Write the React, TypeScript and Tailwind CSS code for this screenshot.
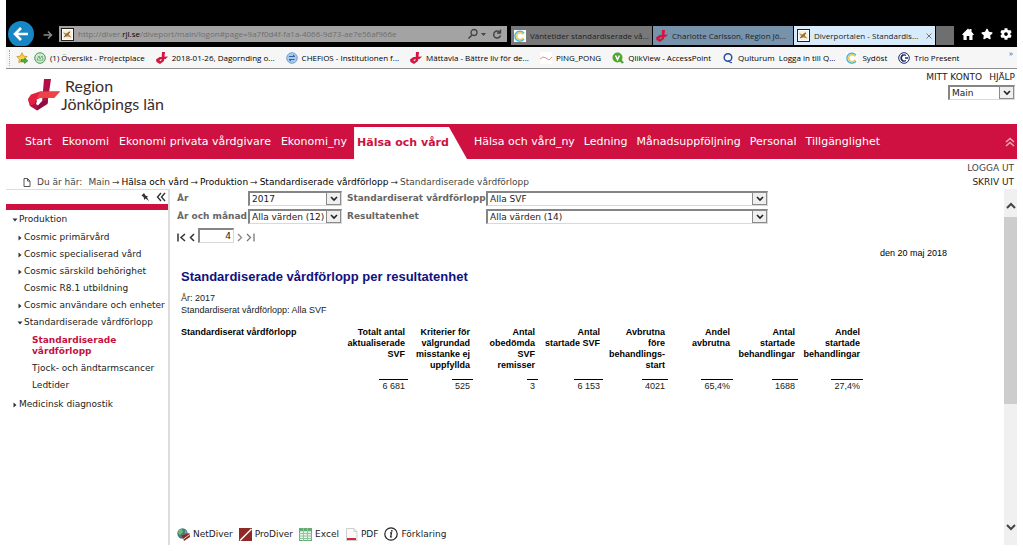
import React, { useState } from "react";
import { FaStar, FaCog } from "react-icons/fa";

type TreeNode = {
  label: string;
  open?: boolean;
  leaf?: boolean;
  active?: boolean;
  children?: TreeNode[];
};

const tree: TreeNode[] = [
  {
    label: "Produktion",
    open: true,
    children: [
      { label: "Cosmic primärvård" },
      { label: "Cosmic specialiserad vård" },
      { label: "Cosmic särskild behörighet" },
      { label: "Cosmic R8.1 utbildning", leaf: true },
      { label: "Cosmic användare och enheter" },
      {
        label: "Standardiserade vårdförlopp",
        open: true,
        children: [
          { label: "Standardiserade vårdförlopp", leaf: true, active: true },
          { label: "Tjock- och ändtarmscancer", leaf: true },
          { label: "Ledtider", leaf: true },
        ],
      },
    ],
  },
  { label: "Medicinsk diagnostik" },
];

const menuBefore = ["Start", "Ekonomi", "Ekonomi privata vårdgivare", "Ekonomi_ny"];
const menuAfter = ["Hälsa och vård_ny", "Ledning", "Månadsuppföljning", "Personal", "Tillgänglighet"];

const columns = [
  { head: ["Totalt antal", "aktualiserade", "SVF"], value: "6 681" },
  { head: ["Kriterier för", "välgrundad", "misstanke ej", "uppfyllda"], value: "525" },
  { head: ["Antal", "obedömda", "SVF", "remisser"], value: "3" },
  { head: ["Antal", "startade SVF"], value: "6 153" },
  { head: ["Avbrutna", "före", "behandlings-", "start"], value: "4021" },
  { head: ["Andel", "avbrutna"], value: "65,4%" },
  { head: ["Antal", "startade", "behandlingar"], value: "1688" },
  { head: ["Andel", "startade", "behandlingar"], value: "27,4%" },
];

function RegionMark({ className }: { className?: string }) {
  return (
    <svg viewBox="0 0 32 33" className={className} aria-hidden="true">
      <path d="M16 0h7l-3.500 24L9 31.500l-7-4.500-2-7 6-3 3 5-1 3 2 1.500 4-3z" fill="#b10f45" />
      <path d="M0 20l3-4.500 9-3h20L26 19H12l-4 2-1 3.500L2 27z" fill="#e2203f" />
      <path d="M12 12.500h20L26 19H9z" fill="#ec4347" />
      <path d="M13.500 22.500L20 21l-0.500 4L9 31.500l1-5z" fill="#8f0d3b" />
    </svg>
  );
}

function SmallMark() {
  return (
    <svg viewBox="0 0 12 12" className="size-3 shrink-0" aria-hidden="true">
      <path d="M6 0h3L8 9l-4 3-3.500-2L0 7.500l3.500-2.500L12 4.500 9.500 7H5.500L3.500 8l0.500 1.300 1.500-1z" fill="#d3163f" />
    </svg>
  );
}

function DiverIcon() {
  return (
    <svg viewBox="0 0 13 13" className="size-[13px] shrink-0" aria-hidden="true">
      <rect x="0.500" y="0.500" width="12" height="12" fill="#fff" stroke="#222" />
      <rect x="2" y="2" width="9" height="9" fill="#f8f0dc" />
      <path d="M2 4l3 1.500 4-2.500-1 3.500 2.500 3-4-1-3 0.500 0.500-2z" fill="#b58a48" />
      <path d="M3 9l6-5" stroke="#5a4a3a" strokeWidth="0.800" />
    </svg>
  );
}

function CIcon() {
  return (
    <svg viewBox="0 0 12 12" className="size-3 shrink-0" aria-hidden="true">
      <rect width="12" height="12" fill="#fff" />
      <path d="M10 3.300A5 5 0 1 0 10 9" fill="none" stroke="#4bb5e6" strokeWidth="1.500" />
      <path d="M9.200 4.300A3.500 3.500 0 1 0 9.200 8" fill="none" stroke="#f2c84b" strokeWidth="1.500" />
    </svg>
  );
}

function ProjectIcon() {
  return (
    <svg viewBox="0 0 12 12" className="size-3 shrink-0" aria-hidden="true">
      <circle cx="6" cy="6" r="5.300" fill="#cfe8cf" stroke="#4e9a5a" />
      <path d="M3 8l2-4 1 3 2-3 1 4z" fill="#fff" stroke="#4e9a5a" strokeWidth="0.800" />
    </svg>
  );
}

function ChefIcon() {
  return (
    <svg viewBox="0 0 12 12" className="size-3 shrink-0" aria-hidden="true">
      <circle cx="6" cy="6" r="5.300" fill="#a9c8ea" stroke="#7a9fcc" />
      <path d="M3 4.500h5.500M3 7.500h5.500M7 3l2 1.500M5 9L3 7.500" stroke="#2d62a3" fill="none" />
    </svg>
  );
}

function PingIcon() {
  return (
    <svg viewBox="0 0 12 12" className="size-3 shrink-0" aria-hidden="true">
      <rect width="12" height="12" fill="#fff" />
      <path d="M0 7l3-2 3 1 3 2 3-3" fill="none" stroke="#e58d8d" />
    </svg>
  );
}

function QlikIcon() {
  return (
    <svg viewBox="0 0 12 12" className="size-3 shrink-0" aria-hidden="true">
      <circle cx="5.500" cy="5.500" r="5" fill="#4ea72e" />
      <path d="M8 8l3 3" stroke="#4ea72e" strokeWidth="2.400" />
      <path d="M3.500 3.500l2 4 2-4" fill="none" stroke="#fff" strokeWidth="1.500" />
    </svg>
  );
}

function QultIcon() {
  return (
    <svg viewBox="0 0 12 12" className="size-3 shrink-0" aria-hidden="true">
      <circle cx="6" cy="5.500" r="3.800" fill="none" stroke="#2a4f9e" strokeWidth="1.500" />
      <path d="M6 8.500q2 2.500 4 2" fill="none" stroke="#2a4f9e" strokeWidth="1.200" />
    </svg>
  );
}

function TrioIcon() {
  return (
    <svg viewBox="0 0 12 12" className="size-3 shrink-0" aria-hidden="true">
      <circle cx="6" cy="6" r="5.300" fill="#fff" stroke="#1b2a6b" />
      <path d="M5 2.500a4 4 0 0 0 0 7M8 3.500a3 3 0 1 0 0 5" fill="none" stroke="#1b2a6b" strokeWidth="1.300" />
      <path d="M7 6h3" stroke="#1b2a6b" strokeWidth="1.500" />
    </svg>
  );
}

function FavStarIcon() {
  return (
    <svg viewBox="0 0 12 12" className="size-3 shrink-0" aria-hidden="true">
      <path d="M6 0.800l1.600 3.300 3.600 0.500-2.600 2.500 0.600 3.600L6 9l-3.200 1.700 0.600-3.600L0.800 4.600l3.600-0.500z" fill="#fbd34a" stroke="#c8931a" strokeWidth="0.800" />
      <path d="M5 7.500h3.500V6L12 8.800 8.500 11.500V10H5z" fill="#4caf3e" stroke="#2f7f2a" strokeWidth="0.500" />
    </svg>
  );
}

const bookmarks = [
  { icon: <ProjectIcon />, label: "(1) Översikt - Projectplace" },
  { icon: <SmallMark />, label: "2018-01-26, Dagornding o..." },
  { icon: <ChefIcon />, label: "CHEFiOS - Institutionen f..." },
  { icon: <SmallMark />, label: "Mättavla - Bättre liv för de..." },
  { icon: <PingIcon />, label: "PING_PONG" },
  { icon: <QlikIcon />, label: "QlikView - AccessPoint" },
  { icon: <QultIcon />, label: "Qulturum  Logga in till Q..." },
  { icon: <CIcon />, label: "Sydöst" },
  { icon: <TrioIcon />, label: "Trio Present" },
];

function SelectBox({ id, options, label }: { id: string; options: string[]; label?: string }) {
  return (
    <div className="relative h-4">
      <select
        id={id}
        aria-label={label}
        className="block h-[15px] w-full appearance-none border border-t-2 border-l-2 border-[#d9d9d9] border-t-[#858585] border-l-[#858585] bg-white pl-0.5 text-[9px] leading-3 font-normal text-[#222]"
      >
        {options.map((option) => (
          <option key={option}>{option}</option>
        ))}
      </select>
      <span className="pointer-events-none absolute top-px right-px flex h-[13px] w-[15px] items-center justify-center border border-[#8a8a8a] bg-[#efefef]">
        <svg viewBox="0 0 8 6" className="h-1.5 w-2" aria-hidden="true">
          <path d="M1 1l3 3 3-3" fill="none" stroke="#222" strokeWidth="1.600" />
        </svg>
      </span>
    </div>
  );
}

function Tree({ nodes, level = 0 }: { nodes: TreeNode[]; level?: number }) {
  return (
    <ul className={level === 0 ? "pl-1" : level === 1 ? "py-px pl-[5px]" : "py-px pl-2"}>
      {nodes.map((node) => (
        <li key={node.label}>
          <a href="#" className="flex py-[3px] leading-[11px]">
            <span className="flex h-[11px] w-[9px] shrink-0 items-center justify-center">
              {!node.leaf && (
                <svg viewBox="0 0 6 6" className="size-1.5" aria-hidden="true">
                  <path d={node.open ? "M0.500 1.500h5L3 4.500z" : "M1.500 0.500v5L4.500 3z"} fill="#333" />
                </svg>
              )}
            </span>
            <span className={node.active ? "w-24 font-bold text-[#c4123f]" : "whitespace-nowrap"}>{node.label}</span>
          </a>
          {node.children && <Tree nodes={node.children} level={level + 1} />}
        </li>
      ))}
    </ul>
  );
}

function BrowserBar() {
  return (
    <div className="bg-black pt-[21px]">
      <div className="flex h-[25px] items-start overflow-hidden font-['Open_Sans',sans-serif] text-[8px]">
        <button aria-label="Bakåt" className="ml-0.5 flex size-[26px] shrink-0 items-center justify-center rounded-full bg-[#1686c4]">
          <svg viewBox="0 0 16 16" className="size-4" aria-hidden="true">
            <path d="M15 8H2.500M8 2L2 8l6 6" fill="none" stroke="#fff" strokeWidth="2.600" />
          </svg>
        </button>
        <button aria-label="Framåt" className="mt-2 ml-2 flex h-3 w-[11px] shrink-0 items-center justify-center">
          <svg viewBox="0 0 10 10" className="size-2.5" aria-hidden="true">
            <path d="M0.500 5h8M5 1.500L8.500 5 5 8.500" fill="none" stroke="#8a8a8a" strokeWidth="1.500" />
          </svg>
        </button>
        <div className="mt-[5px] ml-1.5 flex h-4 min-w-0 flex-1 items-center bg-[#a3a3a3] pr-1 pl-0.5 text-[#6f6f6f]">
          <DiverIcon />
          <div className="ml-1 flex-1 truncate">
            http://diver.<span className="text-black">rjl.se</span>/diveport/main/logon#page=9a7f0d4f-fa1a-4066-9d73-ae7e56af966e
          </div>
          <svg viewBox="0 0 36 12" className="h-3 w-9 shrink-0" aria-hidden="true">
            <circle cx="7" cy="4.500" r="3" fill="none" stroke="#444" strokeWidth="1.300" />
            <path d="M5 7L1.500 10.500" stroke="#444" strokeWidth="1.600" />
            <path d="M14 5h5l-2.500 3z" fill="#444" />
            <path d="M33 4.500A3.500 3.500 0 1 0 33.500 7.500M33.500 1.500v3.500H30" fill="none" stroke="#444" strokeWidth="1.400" />
          </svg>
        </div>
        <div className="mt-[5px] ml-1 flex h-[19px] gap-px text-[#222]">
          <a href="#" className="flex w-[141px] items-center gap-1 bg-[#787878] px-[3px] whitespace-nowrap">
            <CIcon />
            Väntetider standardiserade vå...
          </a>
          <a href="#" className="flex w-[140px] items-center gap-1 bg-[#7693ab] px-[3px] whitespace-nowrap">
            <SmallMark />
            Charlotte Carlsson, Region Jö...
          </a>
          <a href="#" className="flex w-[141px] items-center gap-1 bg-[#d8ebfb] px-[3px] whitespace-nowrap">
            <DiverIcon />
            Diverportalen - Standardis...
            <svg viewBox="0 0 6 6" className="ml-auto size-1.5" aria-hidden="true">
              <path d="M0.500 0.500l5 5M5.500 0.500l-5 5" stroke="#777" />
            </svg>
          </a>
          <button aria-label="Ny flik" className="w-[18px] bg-[#6f6f6f]" />
        </div>
        <div className="mt-[7px] mr-[5px] ml-2 flex gap-[7px] text-white">
          <button aria-label="Startsida">
            <svg viewBox="0 0 12 12" className="size-3" aria-hidden="true">
              <path d="M6 0.500l1.500 1.500V1H9.500v2.800L12 6.500l-1.500 0.800V12H7.300V8H4.700v4H1.500V7.300L0 6.500z" fill="#fff" />
            </svg>
          </button>
          <button aria-label="Favoriter"><FaStar size={12} /></button>
          <button aria-label="Verktyg"><FaCog size={12} /></button>
        </div>
      </div>
      <div className="flex h-[23px] items-center gap-1.5 border-t border-b border-t-black border-b-[#8f8f8f] bg-[#f6f6f7] pl-[3px] font-['Open_Sans',sans-serif] text-[8px] text-black">
        <span className="h-4 border-l border-dotted border-[#aaa]" />
        <FavStarIcon />
        <div className="flex gap-[11px]">
          {bookmarks.map((mark) => (
            <a key={mark.label} href="#" className="flex items-center gap-1 whitespace-pre">
              {mark.icon}
              {mark.label}
            </a>
          ))}
        </div>
        <span className="mr-1 ml-auto self-start text-[#44508a]">»</span>
      </div>
    </div>
  );
}

export default function App() {
  const [page, setPage] = useState("4");

  return (
    <div className="flex min-h-screen flex-col bg-white px-1.5 pb-1.5 font-['DejaVu_Sans',Verdana,sans-serif] text-[9px] text-[#222]">
      <BrowserBar />

      {/* Logo and account */}
      <header className="flex h-[55px] justify-between">
        <a href="#" className="mt-2.5 ml-[22px] flex items-start">
          <RegionMark className="h-[33px] w-8" />
          <span className="-mt-0.5 ml-px font-[Lato,sans-serif] text-[16px] leading-[18px] text-[#3c2c2c]">
            <span className="ml-1">Region</span>
            <br />
            Jönköpings län
          </span>
        </a>
        <div className="mr-0.5">
          <div className="flex justify-end gap-[7px] pt-0.5 leading-3">
            <a href="#">MITT KONTO</a>
            <a href="#">HJÄLP</a>
          </div>
          <div className="mt-0.5 ml-auto w-[67px]">
            <SelectBox id="portal" label="Portal" options={["Main"]} />
          </div>
        </div>
      </header>

      {/* Main menu */}
      <nav className="flex h-[35px] shrink-0 items-center bg-[#ce1141] pr-0.5 text-[11px] whitespace-nowrap text-white">
        <div className="flex gap-2.5 pt-0.5 pl-[19px]">
          {menuBefore.map((item) => (
            <a key={item} href="#">{item}</a>
          ))}
        </div>
        <a
          href="#"
          className="ml-[7px] flex h-8 w-[113px] items-center self-end bg-white pl-[3px] font-bold text-[#ce1141] [clip-path:polygon(0_0,84%_0,100%_100%,0_100%)]"
        >
          Hälsa och vård
        </a>
        <div className="ml-[7px] flex gap-[9px] pt-0.5">
          {menuAfter.map((item) => (
            <a key={item} href="#">{item}</a>
          ))}
        </div>
        <button aria-label="Dölj sidhuvud" className="ml-auto">
          <svg viewBox="0 0 10 10" className="size-2.5" aria-hidden="true">
            <path d="M1 5l4-3.500L9 5M1 9l4-3.500L9 9" fill="none" stroke="#e9a9b8" strokeWidth="1.500" />
          </svg>
        </button>
      </nav>

      {/* Breadcrumb */}
      <div className="flex h-[30px] shrink-0 items-end justify-between pr-[3px] text-[#444]">
        <div className="flex items-center gap-0.5 pl-[17px] leading-[14px] whitespace-nowrap">
          <svg viewBox="0 0 8 9" className="mr-1 h-[9px] w-2" aria-hidden="true">
            <path d="M1 0.500h3.500l2.500 2.500v5.500H1zM4.500 0.500V3H7" fill="none" stroke="#555" />
          </svg>
          <span className="mr-1">Du är här:</span>
          <a href="#">Main</a>
          <span>→</span>
          <a href="#" className="text-black">Hälsa och vård</a>
          <span>→</span>
          <a href="#" className="text-black">Produktion</a>
          <span>→</span>
          <a href="#" className="text-black">Standardiserade vårdförlopp</a>
          <span>→</span>
          <span>Standardiserade vårdförlopp</span>
        </div>
        <div className="flex flex-col items-end leading-[14px]">
          <a href="#">LOGGA UT</a>
          <a href="#" className="text-[#222]">SKRIV UT</a>
        </div>
      </div>

      <div className="flex flex-1">
        {/* Navigation tree */}
        <aside className="w-[164px] shrink-0 border-t border-r-2 border-[#dcdcdc]">
          <div className="flex h-3.5 items-center justify-end gap-1.5 pr-0.5">
            <button aria-label="Fäst">
              <svg viewBox="0 0 10 10" className="size-2.5" aria-hidden="true">
                <path d="M1.500 3.500L4 1l1.500 2.500 2.500 1-1 1L9 9 5.500 6.500 4.500 8 3.500 5z" fill="#333" />
              </svg>
            </button>
            <button aria-label="Fäll ihop">
              <svg viewBox="0 0 10 10" className="size-2.5" aria-hidden="true">
                <path d="M5 1L1.500 5 5 9M9 1L5.500 5 9 9" fill="none" stroke="#333" strokeWidth="1.400" />
              </svg>
            </button>
          </div>
          <div className="h-1.5 bg-[#ce1141]" />
          <div className="pt-px">
            <Tree nodes={tree} />
          </div>
        </aside>

        <main className="flex min-w-0 flex-1 flex-col pt-0.5 pl-[7px]">
          <div className="grid grid-cols-[71px_94px_144px_282px] items-center gap-y-0.5 font-bold text-[#666]">
            <label htmlFor="year">År</label>
            <SelectBox id="year" options={["2017"]} />
            <label htmlFor="pathway" className="pl-[5px] whitespace-nowrap">Standardiserat vårdförlopp</label>
            <SelectBox id="pathway" options={["Alla SVF"]} />
            <label htmlFor="month" className="whitespace-nowrap">År och månad</label>
            <SelectBox id="month" options={["Alla värden (12)"]} />
            <label htmlFor="unit" className="pl-[5px]">Resultatenhet</label>
            <SelectBox id="unit" options={["Alla värden (14)"]} />
          </div>

          {/* Pager */}
          <div className="mt-[3px] flex items-center gap-[3px]">
            <button aria-label="Första sidan">
              <svg viewBox="0 0 9 9" className="mt-1 size-[9px]" aria-hidden="true">
                <path d="M1 0.500v8M8 1L4 4.500 8 8" fill="none" stroke="#333" strokeWidth="1.500" />
              </svg>
            </button>
            <button aria-label="Föregående sida">
              <svg viewBox="0 0 6 9" className="mt-1 h-[9px] w-1.5" aria-hidden="true">
                <path d="M5 1L1.500 4.500 5 8" fill="none" stroke="#333" strokeWidth="1.500" />
              </svg>
            </button>
            <input
              aria-label="Sida"
              value={page}
              onChange={(e) => setPage(e.target.value)}
              className="h-[15px] w-9 border border-t-2 border-l-2 border-[#d9d9d9] border-t-[#858585] border-l-[#858585] pr-0.5 text-right"
            />
            <button aria-label="Nästa sida">
              <svg viewBox="0 0 6 9" className="mt-1 h-[9px] w-1.5" aria-hidden="true">
                <path d="M1 1l3.500 3.500L1 8" fill="none" stroke="#888" strokeWidth="1.300" />
              </svg>
            </button>
            <button aria-label="Sista sidan">
              <svg viewBox="0 0 9 9" className="mt-1 size-[9px]" aria-hidden="true">
                <path d="M1 1l3.500 3.500L1 8M8 0.500v8" fill="none" stroke="#777" strokeWidth="1.300" />
              </svg>
            </button>
          </div>

          {/* Report */}
          <section className="pl-1 font-['Liberation_Sans',Arial,sans-serif] text-black">
            <p className="mt-1 pr-[57px] text-right leading-3">den 20 maj 2018</p>
            <h1 className="mt-2.5 text-[13px] leading-4 font-bold text-[#11117d]">
              Standardiserade vårdförlopp per resultatenhet
            </h1>
            <p className="mt-[7px] leading-3 text-[#222]">
              År: 2017
              <br />
              Standardiserat vårdförlopp: Alla SVF
            </p>
            <table className="mt-[11px] w-[682px] table-fixed">
              <thead>
                <tr className="align-top leading-[11px]">
                  <th className="w-[162px] text-left">Standardiserat vårdförlopp</th>
                  {columns.map((column, idx) => (
                    <th key={idx} className="pr-[3px] text-right whitespace-nowrap">
                      {column.head.map((line) => (
                        <span key={line} className="flex justify-end">{line}</span>
                      ))}
                    </th>
                  ))}
                </tr>
              </thead>
              <tbody>
                <tr>
                  <td />
                  {columns.map((column, idx) => (
                    <td key={idx} className="pt-2 text-right">
                      <span className="inline-block border-t border-black px-[3px] leading-3 text-[#222]">{column.value}</span>
                    </td>
                  ))}
                </tr>
              </tbody>
            </table>
          </section>

          {/* Export links */}
          <div className="mt-auto flex items-center gap-1.5 pb-1 leading-[14px]">
            <a href="#" className="flex items-center gap-[3px]">
              <svg viewBox="0 0 13 13" className="size-[13px]" aria-hidden="true">
                <circle cx="5.500" cy="5.500" r="5.200" fill="#3f7f86" />
                <path d="M2 2l3-1 1 3-3 3-2-2zM8 2l2 2-2 2z" fill="#79b86b" />
                <path d="M4.500 7.500L12.500 5l0.500 4-6 4z" fill="#8e2a25" />
                <path d="M6 11.500L12.500 6.500" stroke="#fff" strokeWidth="0.800" />
              </svg>
              NetDiver
            </a>
            <a href="#" className="flex items-center gap-[3px]">
              <svg viewBox="0 0 13 13" className="size-[13px]" aria-hidden="true">
                <rect width="13" height="13" fill="#8e2a25" />
                <path d="M1 12.500L12.500 1" stroke="#fff" strokeWidth="1.500" />
              </svg>
              ProDiver
            </a>
            <a href="#" className="flex items-center gap-[3px]">
              <svg viewBox="0 0 13 13" className="size-[13px]" aria-hidden="true">
                <rect x="0.500" y="0.500" width="12" height="12" fill="#e7f5e9" stroke="#62ad73" />
                <path d="M0 2h13" stroke="#62ad73" strokeWidth="2.500" />
                <path d="M0 5.500h13M0 8h13M0 10.500h13M4.500 0v13M8.500 0v13" stroke="#8cc79a" />
              </svg>
              Excel
            </a>
            <a href="#" className="flex items-center gap-[3px]">
              <svg viewBox="0 0 13 13" className="size-[13px]" aria-hidden="true">
                <path d="M1.500 0.500h7.500l3 3v9H1.500z" fill="#fafafa" stroke="#cfcfcf" />
                <path d="M9 0.500v3h3" fill="none" stroke="#cfcfcf" />
                <path d="M2 11h9" stroke="#d32c36" strokeWidth="2" />
              </svg>
              PDF
            </a>
            <a href="#" className="flex items-center gap-[3px]">
              <svg viewBox="0 0 14 14" className="size-3.5" aria-hidden="true">
                <circle cx="7" cy="7" r="6.200" fill="#fff" stroke="#222" strokeWidth="1.200" />
                <path d="M6 5.800h1.500L6.600 10h1.500" fill="none" stroke="#222" strokeWidth="1.200" />
                <circle cx="7.800" cy="3.800" r="0.900" fill="#222" />
              </svg>
              Förklaring
            </a>
          </div>
        </main>

        {/* Scroll track */}
        <div className="flex w-[13px] shrink-0 flex-col bg-[#f0f0f0]">
          <button aria-label="Rulla upp" className="flex h-7 items-center justify-center pt-1">
            <svg viewBox="0 0 10 7" className="h-[7px] w-2.5" aria-hidden="true">
              <path d="M1 6l4-4 4 4" fill="none" stroke="#444" strokeWidth="2" />
            </svg>
          </button>
          <div className="flex flex-1 flex-col">
            <div className="h-[64%] bg-[#cdcdcd]" />
          </div>
          <button aria-label="Rulla ned" className="flex h-9 items-center justify-center">
            <svg viewBox="0 0 10 7" className="h-[7px] w-2.5" aria-hidden="true">
              <path d="M1 1l4 4 4-4" fill="none" stroke="#444" strokeWidth="2" />
            </svg>
          </button>
        </div>
      </div>
    </div>
  );
}
